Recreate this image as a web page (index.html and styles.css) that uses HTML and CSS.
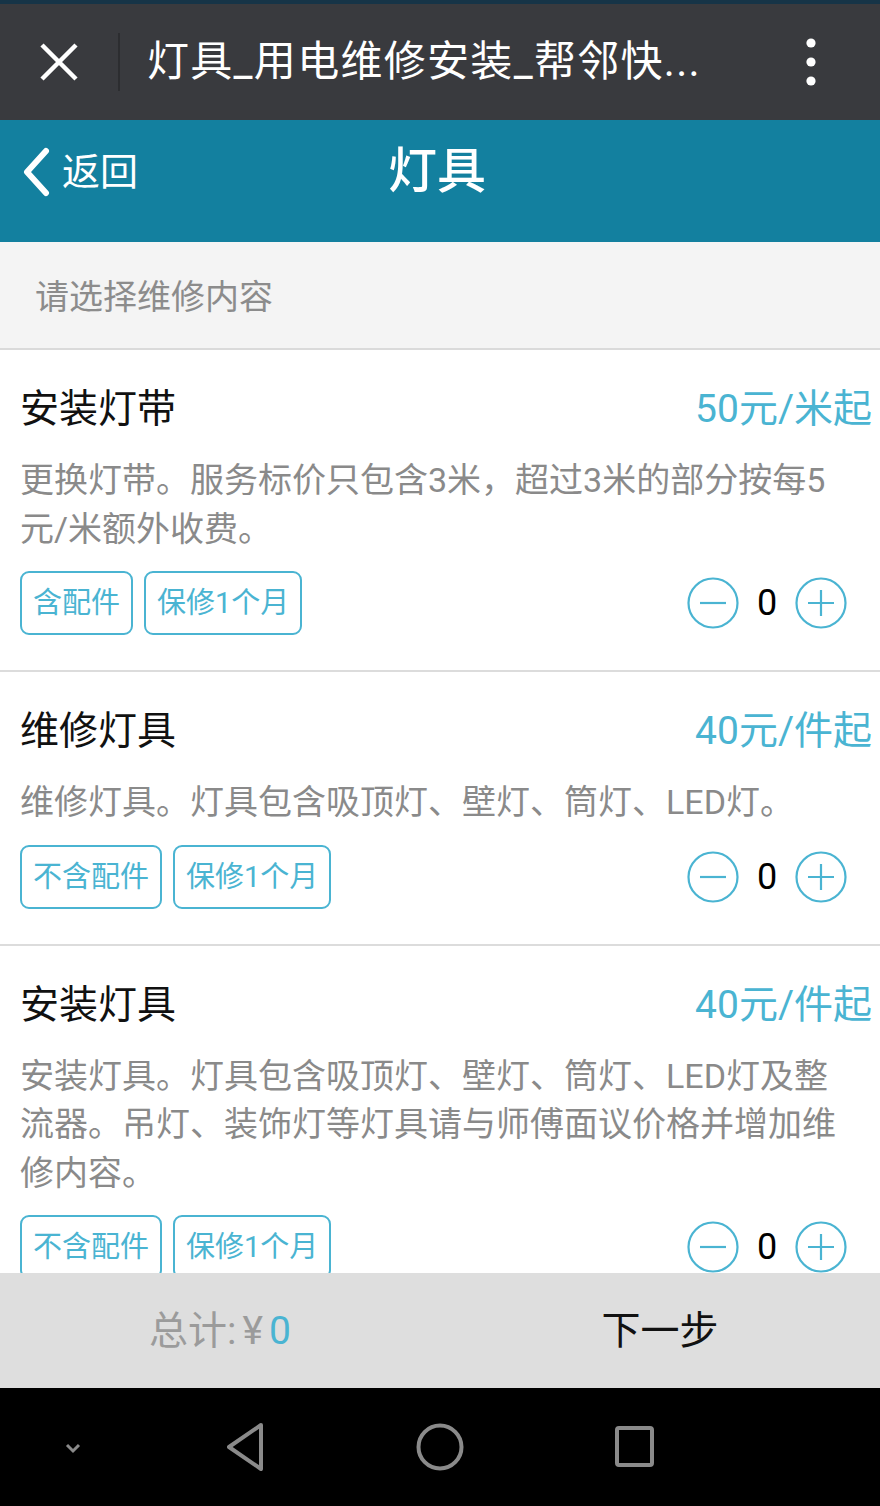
FILE: index.html
```html
<!DOCTYPE html>
<html lang="zh-CN">
<head>
<meta charset="utf-8">
<title>灯具</title>
<link rel="stylesheet" href="styles.css">
</head>
<body>
<div class="app">
  <div class="status-strip"></div>
  <div class="wx-bar">
    <div class="wx-close">
      <svg width="38" height="38" viewBox="0 0 38 38"><path d="M2 2L36 36M36 2L2 36" stroke="#fff" stroke-width="4.5" fill="none"/></svg>
    </div>
    <div class="wx-divider"></div>
    <div class="wx-title">灯具_用电维修安装_帮邻快...</div>
    <div class="wx-more">
      <svg width="12" height="50" viewBox="0 0 12 50"><circle cx="6" cy="6" r="4.6" fill="#fff"/><circle cx="6" cy="25" r="4.6" fill="#fff"/><circle cx="6" cy="44" r="4.6" fill="#fff"/></svg>
    </div>
  </div>

  <header class="app-header">
    <div class="back">
      <svg class="back-icon" width="30" height="50" viewBox="0 0 30 50"><path d="M25 4L6 25L25 46" stroke="#fff" stroke-width="6" stroke-linecap="round" stroke-linejoin="round" fill="none"/></svg>
      <span class="back-text">返回</span>
    </div>
    <h1 class="app-title">灯具</h1>
  </header>

  <div class="subheader">请选择维修内容</div>

  <main class="list">
    <section class="item">
      <div class="item-head">
        <h2 class="item-name">安装灯带</h2>
        <span class="item-price">50元/米起</span>
      </div>
      <p class="item-desc">更换灯带。服务标价只包含3米，超过3米的部分按每5元/米额外收费。</p>
      <div class="item-foot">
        <div class="tags">
          <span class="tag">含配件</span>
          <span class="tag">保修1个月</span>
        </div>
        <div class="counter">
          <svg class="circle-btn" width="52" height="52" viewBox="0 0 52 52"><circle cx="26" cy="26" r="24.5" stroke="#4ab4d2" stroke-width="2.2" fill="none"/><path d="M13 26H39" stroke="#4ab4d2" stroke-width="2.2"/></svg>
          <span class="count">0</span>
          <svg class="circle-btn" width="52" height="52" viewBox="0 0 52 52"><circle cx="26" cy="26" r="24.5" stroke="#4ab4d2" stroke-width="2.2" fill="none"/><path d="M13 26H39M26 13V39" stroke="#4ab4d2" stroke-width="2.2"/></svg>
        </div>
      </div>
    </section>

    <section class="item">
      <div class="item-head">
        <h2 class="item-name">维修灯具</h2>
        <span class="item-price">40元/件起</span>
      </div>
      <p class="item-desc">维修灯具。灯具包含吸顶灯、壁灯、筒灯、LED灯。</p>
      <div class="item-foot">
        <div class="tags">
          <span class="tag">不含配件</span>
          <span class="tag">保修1个月</span>
        </div>
        <div class="counter">
          <svg class="circle-btn" width="52" height="52" viewBox="0 0 52 52"><circle cx="26" cy="26" r="24.5" stroke="#4ab4d2" stroke-width="2.2" fill="none"/><path d="M13 26H39" stroke="#4ab4d2" stroke-width="2.2"/></svg>
          <span class="count">0</span>
          <svg class="circle-btn" width="52" height="52" viewBox="0 0 52 52"><circle cx="26" cy="26" r="24.5" stroke="#4ab4d2" stroke-width="2.2" fill="none"/><path d="M13 26H39M26 13V39" stroke="#4ab4d2" stroke-width="2.2"/></svg>
        </div>
      </div>
    </section>

    <section class="item">
      <div class="item-head">
        <h2 class="item-name">安装灯具</h2>
        <span class="item-price">40元/件起</span>
      </div>
      <p class="item-desc">安装灯具。灯具包含吸顶灯、壁灯、筒灯、LED灯及整流器。吊灯、装饰灯等灯具请与师傅面议价格并增加维修内容。</p>
      <div class="item-foot">
        <div class="tags">
          <span class="tag">不含配件</span>
          <span class="tag">保修1个月</span>
        </div>
        <div class="counter">
          <svg class="circle-btn" width="52" height="52" viewBox="0 0 52 52"><circle cx="26" cy="26" r="24.5" stroke="#4ab4d2" stroke-width="2.2" fill="none"/><path d="M13 26H39" stroke="#4ab4d2" stroke-width="2.2"/></svg>
          <span class="count">0</span>
          <svg class="circle-btn" width="52" height="52" viewBox="0 0 52 52"><circle cx="26" cy="26" r="24.5" stroke="#4ab4d2" stroke-width="2.2" fill="none"/><path d="M13 26H39M26 13V39" stroke="#4ab4d2" stroke-width="2.2"/></svg>
        </div>
      </div>
    </section>
  </main>

  <footer class="cart-bar">
    <div class="total">总计:<span class="yen">¥</span><span class="total-num">0</span></div>
    <div class="next">下一步</div>
  </footer>

  <nav class="sys-nav">
    <div class="nav-item nav-hide">
      <svg width="20" height="14" viewBox="0 0 20 14"><path d="M4 4L10 10L16 4" stroke="#8a8a8a" stroke-width="3" fill="none"/></svg>
    </div>
    <div class="nav-group">
      <div class="nav-item">
        <svg width="48" height="52" viewBox="0 0 48 52"><path d="M40 4L8 26L40 48Z" stroke="#8a8a8a" stroke-width="4" stroke-linejoin="round" fill="none"/></svg>
      </div>
      <div class="nav-item">
        <svg width="52" height="52" viewBox="0 0 52 52"><circle cx="26" cy="26" r="21.5" stroke="#8a8a8a" stroke-width="4" fill="none"/></svg>
      </div>
      <div class="nav-item">
        <svg width="46" height="46" viewBox="0 0 46 46"><rect x="5" y="4" width="35" height="37" rx="2" stroke="#8a8a8a" stroke-width="4" fill="none"/></svg>
      </div>
    </div>
  </nav>
</div>
</body>
</html>
```

FILE: styles.css
```css
* {
  box-sizing: border-box;
}

html, body {
  margin: 0;
  padding: 0;
}

body {
  font-family: Roboto, "Noto Sans CJK SC", sans-serif;
  background: #000;
}

.app {
  width: 880px;
  height: 1506px;
  display: flex;
  flex-direction: column;
  overflow: hidden;
  background: #fff;
}

.status-strip {
  height: 4px;
  background: #163447;
  flex: none;
}

/* WeChat top bar */
.wx-bar {
  height: 116px;
  flex: none;
  background: #393a3e;
  display: flex;
  align-items: center;
}

.wx-close {
  width: 118px;
  display: flex;
  justify-content: center;
  align-items: center;
}

.wx-divider {
  width: 2px;
  height: 58px;
  background: #2c2d30;
}

.wx-title {
  flex: 1;
  padding-left: 27px;
  color: #fff;
  font-size: 42px;
  line-height: 50px;
  white-space: nowrap;
  letter-spacing: 1.3px;
}

.wx-more {
  width: 12px;
  margin-right: 63px;
  display: flex;
  align-items: center;
}

/* App header */
.app-header {
  height: 122px;
  flex: none;
  background: #13809f;
  display: flex;
  align-items: center;
  justify-content: center;
  padding-bottom: 18px;
  position: relative;
}

.back {
  position: absolute;
  left: 21px;
  top: 0;
  bottom: 18px;
  display: flex;
  align-items: center;
  color: #fff;
}

.back-icon {
  display: block;
}

.back-text {
  font-size: 38px;
  line-height: 50px;
  margin-left: 11px;
}

.app-title {
  margin: 0;
  color: #fff;
  font-size: 49px;
  font-weight: 500;
  line-height: 60px;
  margin-left: -6px;
}

/* Sub header */
.subheader {
  height: 108px;
  flex: none;
  background: #f4f4f4;
  border-bottom: 2px solid #dadada;
  padding-left: 35px;
  font-size: 34px;
  line-height: 110px;
  color: #8c8c8c;
}

/* List */
.list {
  flex: 1;
  overflow: hidden;
}

.item {
  padding: 34px 8px 35px 20px;
  border-bottom: 2px solid #dcdcdc;
}

.item-head {
  display: flex;
  justify-content: space-between;
  align-items: center;
  height: 50px;
}

.item-name {
  margin: 0;
  font-size: 39px;
  font-weight: 400;
  line-height: 50px;
  color: #111;
}

.item-price {
  font-size: 39px;
  line-height: 50px;
  color: #4ab4d2;
}

.item-desc {
  margin: 22px 24px 0 0;
  font-size: 34px;
  line-height: 48.5px;
  color: #8a8a8a;
}

.item-foot {
  margin-top: 18px;
  display: flex;
  justify-content: space-between;
  align-items: center;
}

.tags {
  display: flex;
  gap: 11px;
}

.tag {
  height: 64px;
  padding: 0 11px;
  border: 2px solid #4ab4d2;
  border-radius: 9px;
  font-size: 29px;
  line-height: 60px;
  color: #4ab4d2;
}

.counter {
  display: flex;
  align-items: center;
  margin-right: 25px;
}

.circle-btn {
  display: block;
}

.count {
  width: 56px;
  text-align: center;
  font-size: 36px;
  line-height: 50px;
  color: #000;
}

/* Bottom cart bar */
.cart-bar {
  height: 115px;
  flex: none;
  background: #dedede;
  display: flex;
  align-items: center;
}

.total,
.next {
  flex: 1;
  text-align: center;
  font-size: 39px;
  line-height: 50px;
}

.total {
  color: #9b9b9b;
}

.yen {
  margin-left: 6px;
}

.total-num {
  color: #4ab4d2;
  margin-left: 6px;
}

.next {
  color: #111;
}

/* System navigation */
.sys-nav {
  height: 118px;
  flex: none;
  background: #000;
  display: flex;
  align-items: center;
  padding-left: 43px;
}

.nav-item {
  width: 60px;
  display: flex;
  justify-content: center;
  align-items: center;
}

.nav-hide {
  padding-top: 2px;
}

.nav-group {
  display: flex;
  gap: 135px;
  margin-left: 112px;
}
```
